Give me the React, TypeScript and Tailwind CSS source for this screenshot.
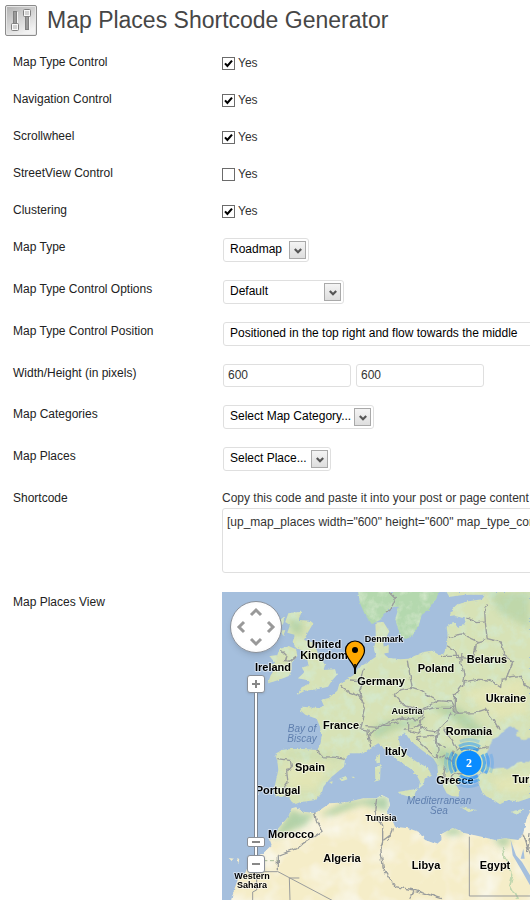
import { type ReactNode } from "react";

type RowProps = {
    label: string;
    htmlFor?: string;
    className?: string;
    labelClassName?: string;
    children: ReactNode;
};

function Row({
    label,
    htmlFor,
    className = "h-[42px]",
    labelClassName = "",
    children,
}: RowProps) {
    return (
        <div className={`flex items-start ${className}`}>
            <label
                htmlFor={htmlFor}
                className={`w-[209px] shrink-0 leading-4 ${labelClassName}`}
            >
                {label}
            </label>
            <div className="min-w-0 flex-1">{children}</div>
        </div>
    );
}

type CheckRowProps = { label: string; id: string; checked?: boolean };

function CheckRow({ label, id, checked = false }: CheckRowProps) {
    return (
        <Row label={label} htmlFor={id} className="h-[37px]">
            <div className="flex items-center gap-[3px] pt-px leading-4 text-[#333]">
                <span className="relative flex">
                    <input
                        id={id}
                        type="checkbox"
                        defaultChecked={checked}
                        className="peer h-[13px] w-[13px] appearance-none border border-[#6b6b6b] bg-white"
                    />
                    <svg
                        viewBox="0 0 13 13"
                        className="pointer-events-none absolute inset-0 hidden h-[13px] w-[13px] peer-checked:block"
                    >
                        <path
                            d="M3 6.4 5.4 9 10 3.6"
                            fill="none"
                            stroke="#000"
                            strokeWidth="2.1"
                        />
                    </svg>
                </span>
                <label htmlFor={id}>Yes</label>
            </div>
        </Row>
    );
}

type SelectProps = { id: string; value: string; className: string };

function Select({ id, value, className }: SelectProps) {
    return (
        <div className={`relative ml-px -mt-px ${className}`}>
            <select
                id={id}
                className="block h-6 w-full appearance-none rounded-[3px] border border-[#dfdfdf] bg-white pb-[2px] pl-[6px] text-black"
            >
                <option>{value}</option>
            </select>
            <span className="pointer-events-none absolute top-[3px] right-[3px] flex h-[18px] w-[17px] items-center justify-center border border-[#a9a9a9] bg-linear-to-b from-[#f4f4f4] to-[#dedede]">
                <svg viewBox="0 0 8 6" className="mt-px h-[6px] w-2">
                    <path
                        d="M.8 1 4 4.2 7.2 1"
                        fill="none"
                        stroke="#555"
                        strokeWidth="2.2"
                    />
                </svg>
            </span>
        </div>
    );
}

function SettingsIcon() {
    return (
        <svg viewBox="0 0 32 31" className="h-[31px] w-8 shrink-0">
            <defs>
                <linearGradient id="tile" x1="0" y1="0" x2="0.6" y2="1">
                    <stop offset="0" stopColor="#b4b4b4" />
                    <stop offset="0.5" stopColor="#d2d2d2" />
                    <stop offset="1" stopColor="#f2f2f2" />
                </linearGradient>
            </defs>
            <rect x=".5" y=".5" width="31" height="30" rx="1.5" fill="#e6e6e6" stroke="#8c8c8c" />
            <rect x="2" y="2" width="28" height="27" fill="url(#tile)" />
            <g stroke="#808080" strokeWidth="1">
                <rect x="8.5" y="6.5" width="3" height="13" fill="#9a9a9a" />
                <path d="M12.5 7v12M24.5 12v12" stroke="#f5f5f5" />
                <rect x="20.5" y="11.5" width="3" height="13" fill="#9a9a9a" />
                <rect x="6.5" y="18.5" width="7" height="7" rx="1" fill="#f8f8f8" />
                <rect x="18.5" y="4.5" width="7" height="7" rx="1" fill="#f8f8f8" />
                <path d="M8 21h4M8 23h4M20 7h4M20 9h4" stroke="#aaa" />
            </g>
        </svg>
    );
}

const countries: [string, number, number][] = [
    ["United", 102, 56],
    ["Kingdom", 102, 67],
    ["Ireland", 51, 79],
    ["Germany", 159, 93],
    ["Poland", 214, 80],
    ["Belarus", 265, 71],
    ["Ukraine", 284, 110],
    ["France", 119, 137],
    ["Romania", 247, 143],
    ["Italy", 174, 163],
    ["Spain", 88, 179],
    ["Portugal", 56, 202],
    ["Greece", 233, 192],
    ["Turkey", 308, 191],
    ["Morocco", 69, 246],
    ["Algeria", 120, 270],
    ["Libya", 204, 277],
    ["Egypt", 273, 277],
];

const smallCountries: [string, number, number][] = [
    ["Denmark", 162, 50],
    ["Austria", 185, 122],
    ["Tunisia", 159, 229],
    ["Western", 30, 287],
    ["Sahara", 30, 296],
];

const seas: [string, number, number][] = [
    ["Bay of", 80, 140],
    ["Biscay", 80, 150],
    ["Mediterranean", 217, 212],
    ["Sea", 217, 222],
];

function Labels({ items }: { items: [string, number, number][] }) {
    return (
        <>
            {items.map(([name, x, y]) => (
                <text key={name} x={x} y={y}>
                    {name}
                </text>
            ))}
        </>
    );
}

function EuropeMap() {
    return (
        <svg
            viewBox="0 0 308 308"
            preserveAspectRatio="xMidYMid slice"
            className="block h-full w-full bg-[#a5bfdd]"
        >
            <defs>
                <filter id="terrain" x="0" y="0" width="924" height="924" filterUnits="userSpaceOnUse">
                    <feTurbulence type="fractalNoise" baseFrequency="0.12" numOctaves="3" seed="4" result="edge" />
                    <feDisplacementMap in="SourceGraphic" in2="edge" scale="8" xChannelSelector="R" yChannelSelector="G" result="land" />
                    <feTurbulence type="fractalNoise" baseFrequency="0.03" numOctaves="4" seed="9" />
                    <feColorMatrix values="0 0 0 0 0.66  0 0 0 0 0.81  0 0 0 0 0.6  2.4 0 0 0 -1.05" />
                    <feComposite in2="land" operator="in" result="woods" />
                    <feMerge>
                        <feMergeNode in="land" />
                        <feMergeNode in="woods" />
                    </feMerge>
                </filter>
                <filter id="desert" x="0" y="0" width="924" height="924" filterUnits="userSpaceOnUse">
                    <feTurbulence type="fractalNoise" baseFrequency="0.1" numOctaves="2" seed="6" result="edge" />
                    <feDisplacementMap in="SourceGraphic" in2="edge" scale="8" xChannelSelector="R" yChannelSelector="G" result="land" />
                    <feTurbulence type="fractalNoise" baseFrequency="0.012" numOctaves="3" seed="2" />
                    <feColorMatrix values="0 0 0 0 0.95  0 0 0 0 0.93  0 0 0 0 0.82  2.4 0 0 0 -1" />
                    <feComposite in2="land" operator="in" result="dunes" />
                    <feMerge>
                        <feMergeNode in="land" />
                        <feMergeNode in="dunes" />
                    </feMerge>
                </filter>
                <filter id="rough" x="0" y="0" width="924" height="924" filterUnits="userSpaceOnUse">
                    <feTurbulence type="fractalNoise" baseFrequency="0.05" numOctaves="2" seed="3" />
                    <feDisplacementMap in="SourceGraphic" scale="16" xChannelSelector="R" yChannelSelector="G" />
                </filter>
                <filter id="soft" x="-30%" y="-30%" width="160%" height="160%">
                    <feGaussianBlur stdDeviation="9" />
                </filter>
                <clipPath id="africa">
                    <path d="M24 924 34 899 49 859 69 844 89 799 124 784 149 759 144 744 169 709 199 674 209 649 222 646 244 659 279 664 324 634 374 631 424 619 464 619 479 609 499 619 504 639 494 659 509 679 519 704 559 709 589 719 609 744 644 757 659 744 657 727 694 707 729 724 779 734 819 744 849 739 904 740V924Z" />
                </clipPath>
            </defs>

            <g transform="scale(0.33333)">
                <g filter="url(#terrain)" fill="#d7e2b6">
                    {/* Great Britain, Ireland and the isles */}
                    <path d="M199 64 239 59 229 84 264 86 274 94 256 124 246 144 276 152 290 190 309 219 304 234 339 232 344 249 329 267 318 284 284 292 249 296 226 308 239 286 262 276 256 264 228 259 246 242 240 226 260 222 256 204 236 199 244 176 222 168 212 150 218 128 196 122 204 100 190 90Z" />
                    <path d="M142 192 166 190 172 172 200 162 222 172 226 192 209 212 209 236 200 252 170 264 138 274 146 250 158 232 138 222 158 210Z" />
                    <path d="M172 86 186 74 184 94 174 108ZM176 116 190 114 184 132Z" />
                    {/* Scandinavia */}
                    <path fill="#b4d8ae" d="M409 0 414 34 428 66 449 96 474 84 494 58 514 44 530 44 520 84 534 129 549 141 569 134 579 119 589 104 599 69 619 54 644 19 652 0Z" />
                    {/* Continental Europe and Turkey */}
                    <path d="M924 0H674L682 14 730 8 790 8 780 22 739 28 704 38 689 54 699 72 729 79 727 96 709 108 694 90 674 104 677 130 674 164 666 184 654 190 629 176 604 180 559 200 534 202 500 198 488 188 484 154 502 118 484 90 460 92 462 140 456 170 462 194 439 210 409 228 394 250 352 276 346 296 320 318 298 324 306 342 290 348 240 344 234 354 250 368 284 380 294 404 299 434 294 459 286 474 244 471 209 471 179 474 159 487 166 507 169 534 159 579 154 599 164 614 199 614 209 629 219 637 234 631 279 624 299 604 304 584 329 554 354 534 366 524 369 499 384 484 424 484 444 469 469 454 499 479 534 509 564 529 584 549 594 569 590 590 604 578 609 559 629 552 619 529 584 509 554 489 534 459 529 434 549 422 564 444 599 474 634 499 646 519 649 554 664 584 674 604 689 612 709 614 712 596 700 574 720 570 716 552 740 556 780 540 764 560 774 584 784 609 809 620 834 637 859 624 889 629 924 617Z" />
                    <path d="M459 529 476 516 474 564 460 569ZM462 494 474 482 474 512 464 514Z" />
                    <path d="M528 600 584 590 574 618 534 606ZM716 646 764 654 740 660ZM866 660 904 650 886 668Z" />
                    <path d="M352 560 372 552 376 562 360 568ZM322 570 332 568 330 576ZM388 554 398 554 396 560Z" />
                    <path d="M484 164 500 158 500 182 488 184ZM466 170 480 172 476 186 466 184ZM686 60 702 58 698 70 684 72Z" />
                </g>

                {/* Woods and mountain ranges */}
                <g filter="url(#soft)" fill="#8fbf92" opacity="0.45">
                    <path d="M446 416Q480 380 560 384L600 372 596 396 520 410 460 440Z" />
                    <path d="M620 340Q700 330 740 370L790 420 760 440 690 380Z" />
                    <path d="M640 470 720 480 760 520 700 540 650 520Z" />
                    <path d="M800 0H924V110L830 60Z" opacity=".7" />
                    <path d="M200 80 240 90 240 130 210 120Z" />
                    <path d="M190 482 360 490 340 500 190 490Z" opacity=".5" />
                </g>
                <g filter="url(#soft)" fill="#e6e6b4" opacity="0.7">
                    <path d="M190 520 330 510 280 590 200 590Z" />
                    <path d="M810 560 924 540V600L830 600Z" />
                    <path d="M720 300 900 260 924 360 820 380Z" />
                </g>

                {/* Black Sea */}
                <path fill="#a5bfdd" filter="url(#rough)" d="M796 524 789 494 804 459 822 434 836 428 850 412 878 402 890 414 878 428 900 444 940 432V510L894 509 854 529 814 532Z" />
                <path fill="#a5bfdd" d="M774 544 796 534 798 542Z" />

                {/* North Africa and the Levant */}
                <g filter="url(#desert)" fill="#f5edc8">
                    <path d="M24 940 34 899 49 859 69 844 89 799 124 784 149 759 144 744 169 709 199 674 209 649 222 646 244 659 279 664 324 634 374 631 424 619 464 619 479 609 499 619 504 639 494 659 509 679 519 704 559 709 589 719 609 744 644 757 659 744 657 727 694 707 729 724 779 734 819 744 849 739 889 744 904 724 914 679 940 630V940Z" />
                    <path d="M20 798 36 800 30 808ZM42 806 52 798 50 812Z" />
                </g>
                <g filter="url(#soft)" fill="#a3cba0" clipPath="url(#africa)" opacity="0.8">
                    <path d="M150 740 209 650 240 665 280 660 250 700 200 720Z" />
                    <path d="M290 670 370 630 500 610 500 660 420 636 330 670Z" />
                    <path d="M657 724 694 704 730 724 690 730Z" />
                    <path d="M810 736H870L845 770Z" />
                </g>
                <path d="M842 762 846 790 864 820 872 850 864 880 886 924" fill="none" stroke="#bfd6ae" strokeWidth="5" filter="url(#rough)" />
                <path fill="#a5bfdd" d="M866 744 882 790 900 810 924 850V880L896 830 872 790ZM896 800 904 770 908 800Z" />

                {/* Borders */}
                <g fill="none" stroke="#999c9c" strokeWidth="4" filter="url(#rough)">
                    <path d="M178 178 192 192 188 206 206 208 222 196" />
                    <path d="M356 280 380 300 412 312 424 330 430 352 424 380 416 410 438 414 440 440 446 468" />
                    <path d="M384 264 416 266 424 230M420 318 412 296 424 270" />
                    <path d="M430 404 470 406 500 390 540 378 590 384 606 356" />
                    <path d="M442 430 470 400 500 400 530 390M544 412 570 408 600 396M560 392 560 416 590 424 600 402" />
                    <path d="M556 206 564 250 570 286 530 296 520 312 546 340 580 350 606 352 632 336 650 326 690 330 700 348" />
                    <path d="M570 286 600 296 640 324M606 356 640 346 694 346 700 366" />
                    <path d="M720 186 716 210 726 250 722 280 700 310 700 344 704 364 760 362 790 352 812 380 824 400 832 410" />
                    <path d="M654 190 714 190M676 162 700 176 706 196 754 200 764 150 792 142" />
                    <path d="M676 134 720 126 768 148M736 78 766 92 790 90 788 50 796 34" />
                    <path d="M790 92 796 140 838 150 846 190 872 210 864 230 852 260 838 262 836 286 800 264 770 262 722 270" />
                    <path d="M852 256 896 250 906 276 940 300" />
                    <path d="M604 374 594 402 620 416 646 420 664 400 690 362M646 422 640 446 668 470" />
                    <path d="M668 410 692 446 704 470 740 476 800 464M584 434 640 430 648 472 646 500 590 450 584 434M652 500 668 490 692 510 700 540M670 520 664 560 680 566 700 546 750 542M692 510 696 476" />
                    <path d="M284 474 300 494 340 496 368 502" />
                    <path d="M166 500 206 506 208 522 194 540 198 570 188 584 190 612" />
                    <path d="M278 662 284 690 300 718 254 748 222 770 180 786 166 792V838" />
                    <path d="M464 622 458 656 482 700 482 750 476 770 484 830 520 884 576 894" />
                    <path d="M576 894 660 920M576 894 566 924M514 706 508 730 484 748" />
                    <path d="M500 0 520 20 508 48 492 60M904 728 916 780 930 690" />
                </g>
                <g fill="none" stroke="#999c9c" strokeWidth="3">
                    <path d="M166 838 336 928M166 839H104V894L92 900V924M204 924 202 858H232" />
                    <path d="M742 734V912H924M904 728 926 790" />
                    <path d="M124 806H168" stroke="#a9bd99" strokeDasharray="12 8" />
                </g>
            </g>

            <g
                textAnchor="middle"
                fill="#000"
                stroke="#fff"
                strokeOpacity="0.5"
                strokeWidth="2"
                strokeLinejoin="round"
                paintOrder="stroke"
                className="font-bold"
            >
                <g fontSize="11">
                    <Labels items={countries} />
                </g>
                <g fontSize="9">
                    <Labels items={smallCountries} />
                </g>
            </g>
            <g textAnchor="middle" fontSize="10" fill="#5f7fae" className="italic">
                <Labels items={seas} />
            </g>

            {/* Single place */}
            <path
                d="M133 82V79C133 71 123.500 67 123.500 58.500A9.500 9.500 0 0 1 142.500 58.500C142.500 67 133 71 133 79Z"
                fill="#ffa800"
                stroke="#000"
                strokeWidth="1.200"
            />
            <path d="M133 72V82" stroke="#000" strokeWidth="1.600" />
            <circle cx="133" cy="58" r="3" />

            {/* Clustered places */}
            <g fill="none" stroke="#0a8cff">
                <circle cx="247" cy="171" r="15.500" strokeWidth="3" strokeOpacity="0.6" strokeDasharray="19 5.350" strokeDashoffset="9.500" />
                <circle cx="247" cy="171" r="19.500" strokeWidth="3" strokeOpacity="0.45" strokeDasharray="22 8.630" strokeDashoffset="11" />
                <circle cx="247" cy="171" r="23.500" strokeWidth="3" strokeOpacity="0.2" strokeDasharray="20 16.910" strokeDashoffset="10" />
            </g>
            <circle cx="247" cy="171" r="12.500" fill="#0a8cff" />
            <text
                x="247"
                y="175"
                textAnchor="middle"
                fontSize="12"
                fill="#fff"
                className="font-['Liberation_Serif',serif] font-bold"
            >
                2
            </text>
        </svg>
    );
}

const arrows = [
    { label: "Pan up", place: "top-1 left-[18px]", d: "M2 9 7 4 12 9" },
    { label: "Pan left", place: "top-[18px] left-1", d: "M9 2 4 7 9 12" },
    { label: "Pan right", place: "top-[18px] right-1", d: "M5 2 10 7 5 12" },
    { label: "Pan down", place: "bottom-1 left-[18px]", d: "M2 5 7 10 12 5" },
];

function ZoomButton({ label, d }: { label: string; d: string }) {
    return (
        <button
            type="button"
            aria-label={label}
            className="relative flex h-[18px] w-[18px] items-center justify-center rounded-[3px] border border-[#8a9099] bg-white shadow-sm"
        >
            <svg viewBox="0 0 10 10" className="h-[10px] w-[10px]">
                <path d={d} stroke="#888" strokeWidth="2" />
            </svg>
        </button>
    );
}

function MapControls() {
    return (
        <div className="absolute top-[9px] left-2 flex flex-col items-center">
            <div className="relative h-[52px] w-[52px] rounded-full border border-[#8a9099] bg-radial from-white from-60% to-[#f0f0f0] shadow-md">
                {arrows.map(({ label, place, d }) => (
                    <button
                        key={label}
                        type="button"
                        aria-label={label}
                        className={`absolute h-[14px] w-[14px] ${place}`}
                    >
                        <svg viewBox="0 0 14 14">
                            <path d={d} fill="none" stroke="#999" strokeWidth="3" />
                        </svg>
                    </button>
                ))}
            </div>
            <div className="mt-[22px] flex flex-col items-center">
                <ZoomButton label="Zoom in" d="M1 5h8M5 1v8" />
                <div className="relative flex h-[162px] w-[18px] justify-center">
                    <div className="h-full w-1 border-x border-[#7d8794] bg-white" />
                    <input
                        type="range"
                        aria-label="Zoom level"
                        defaultValue={5}
                        className="absolute inset-0 h-full w-[18px] appearance-none bg-transparent [direction:rtl] [writing-mode:vertical-lr] [&::-webkit-slider-thumb]:h-[10px] [&::-webkit-slider-thumb]:w-[18px] [&::-webkit-slider-thumb]:appearance-none [&::-webkit-slider-thumb]:rounded-[2px] [&::-webkit-slider-thumb]:border [&::-webkit-slider-thumb]:border-[#8a9099] [&::-webkit-slider-thumb]:bg-[linear-gradient(#888,#888)] [&::-webkit-slider-thumb]:bg-[length:8px_2px] [&::-webkit-slider-thumb]:bg-center [&::-webkit-slider-thumb]:bg-no-repeat [&::-webkit-slider-thumb]:bg-white"
                    />
                </div>
                <ZoomButton label="Zoom out" d="M1 5h8" />
            </div>
        </div>
    );
}

export default function App() {
    return (
        <main className="min-h-screen overflow-x-hidden bg-white font-['Liberation_Sans',Arial,sans-serif] text-xs text-[#222]">
            <header className="flex items-center gap-[10px] px-[5px] pt-1">
                <SettingsIcon />
                <h1 className="text-[23px] leading-8 text-[#464646]">
                    Map Places Shortcode Generator
                </h1>
            </header>
            <form className="pt-[18px] pl-[13px]">
                <CheckRow label="Map Type Control" id="type-control" checked />
                <CheckRow label="Navigation Control" id="navigation" checked />
                <CheckRow label="Scrollwheel" id="scrollwheel" checked />
                <CheckRow label="StreetView Control" id="streetview" />
                <CheckRow label="Clustering" id="clustering" checked />
                <Row label="Map Type" htmlFor="map-type">
                    <Select id="map-type" value="Roadmap" className="w-[86px]" />
                </Row>
                <Row label="Map Type Control Options" htmlFor="options">
                    <Select id="options" value="Default" className="w-[121px]" />
                </Row>
                <Row label="Map Type Control Position" htmlFor="position">
                    <Select
                        id="position"
                        value="Positioned in the top right and flow towards the middle"
                        className="w-[340px]"
                    />
                </Row>
                <Row
                    label="Width/Height (in pixels)"
                    htmlFor="width"
                    className="h-[41px]"
                >
                    <div className="-mt-px ml-px flex gap-[5px] text-[#333]">
                        <input
                            id="width"
                            defaultValue="600"
                            className="h-[23px] w-32 rounded-[3px] border border-[#dfdfdf] px-1 pb-px"
                        />
                        <input
                            aria-label="Height"
                            defaultValue="600"
                            className="h-[23px] w-32 rounded-[3px] border border-[#dfdfdf] px-1 pb-px"
                        />
                    </div>
                </Row>
                <Row label="Map Categories" htmlFor="category">
                    <Select
                        id="category"
                        value="Select Map Category..."
                        className="w-[151px]"
                    />
                </Row>
                <Row label="Map Places" htmlFor="place">
                    <Select
                        id="place"
                        value="Select Place..."
                        className="w-[108px]"
                    />
                </Row>
                <Row label="Shortcode" htmlFor="shortcode" className="h-[102px]">
                    <p className="leading-4 whitespace-nowrap text-[#333]">
                        Copy this code and paste it into your post or page content
                    </p>
                    <textarea
                        id="shortcode"
                        wrap="off"
                        defaultValue={
                            '[up_map_places width="600" height="600" map_type_control="true"]'
                        }
                        className="mt-[2px] block h-[65px] w-[600px] resize-none overflow-hidden rounded-[3px] border border-[#dfdfdf] px-1 py-[5px] leading-4 text-[#333]"
                    />
                </Row>
                <Row label="Map Places View" className="" labelClassName="pt-[2px]">
                    <div className="relative aspect-square w-full overflow-hidden">
                        <EuropeMap />
                        <MapControls />
                    </div>
                </Row>
            </form>
        </main>
    );
}
